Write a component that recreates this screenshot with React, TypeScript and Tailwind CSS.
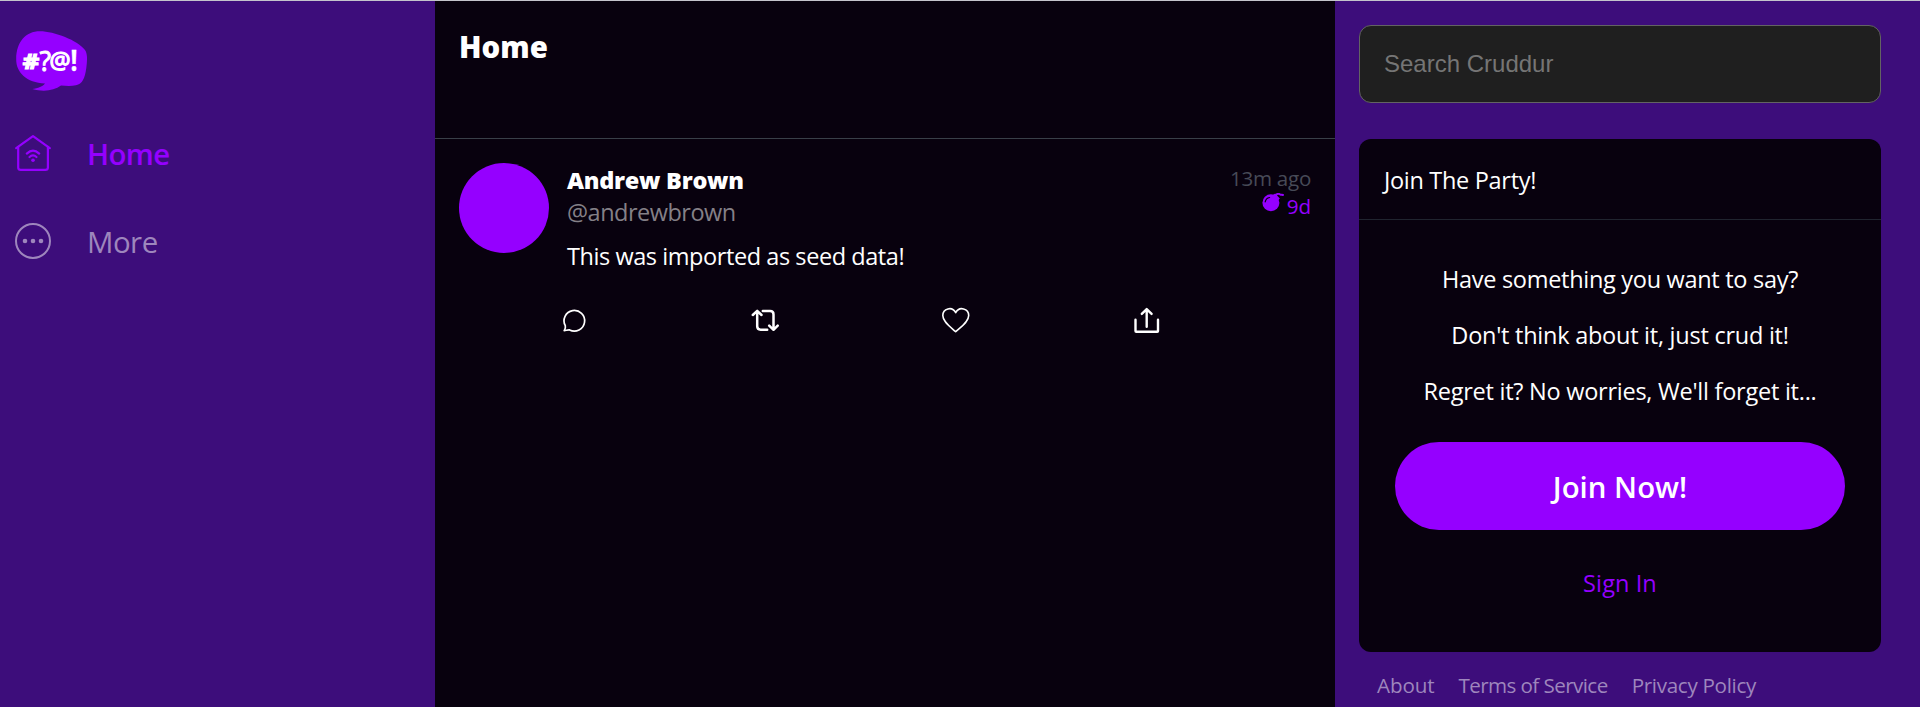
import type { ReactNode } from 'react';

function Logo() {
  return (
    <svg className="block h-[60px] w-[72px]" viewBox="16 31 72 60" role="img" aria-label="Cruddur">
      <path
        fill="#9500ff"
        d="M16.2 59C16.4 42 25.500 31.300 40 31.300C54 31.300 78 40.500 85 50C87.800 54 87.200 61 86.300 68C84.800 79 82.500 83.500 76 85.300C71 86.500 66 86 61 85.600C54 90.600 44 92.200 32.200 89.100C38 88.200 43 86.300 45 83.400C26 83 15.900 72 16.200 59Z"
      />
      <g fill="#fff" stroke="#fff" className="font-['Open_Sans',sans-serif]">
        <text x="22.800" y="68.700" fontSize="21.500" strokeWidth="1.200" fontWeight="700" textLength="16.500" lengthAdjust="spacingAndGlyphs">#</text>
        <text x="39.600" y="71.300" fontSize="28" strokeWidth="1" fontWeight="500" textLength="11.500" lengthAdjust="spacingAndGlyphs">?</text>
        <text x="49.400" y="68.800" fontSize="23.500" strokeWidth="1.200" fontWeight="400" textLength="21" lengthAdjust="spacingAndGlyphs">@</text>
        <text x="70.400" y="71.300" fontSize="28" strokeWidth="0.400" fontWeight="700" textLength="7" lengthAdjust="spacingAndGlyphs">!</text>
      </g>
    </svg>
  );
}

function HouseIcon() {
  return (
    <svg className="block size-9 shrink-0" viewBox="0 0 36 36" fill="none" stroke="currentColor" strokeWidth="2.200" strokeLinecap="round" strokeLinejoin="round">
      <path d="M1.200 13.200L18 1.200L34.800 13.200" />
      <path d="M3.200 11.800V32.400Q3.200 34.800 5.800 34.800H30.300Q32.900 34.800 32.900 32.400V11.800" />
      <path d="M11.800 18.600Q18 12.800 24.200 18.600M14.500 22Q18 18.900 21.500 22" />
      <circle cx="18" cy="25.300" r="1.800" fill="currentColor" stroke="none" />
    </svg>
  );
}

function MoreIcon() {
  return (
    <svg className="block size-9 shrink-0" viewBox="0 0 36 36" fill="currentColor">
      <circle cx="18" cy="18" r="17" fill="none" stroke="currentColor" strokeWidth="2" />
      <circle cx="10" cy="18" r="2.300" />
      <circle cx="18" cy="18" r="2.300" />
      <circle cx="26" cy="18" r="2.300" />
    </svg>
  );
}

function BombIcon() {
  return (
    <svg className="block h-[19px] w-[22px] shrink-0" viewBox="0 0 22 19">
      <circle cx="8.900" cy="9.800" r="8.500" fill="#9500ff" />
      <path d="M10.500 2.200L13.200 0.400L17.800 5.400L15.500 8Z" fill="#9500ff" />
      <path d="M14 2.200C15 0.600 16.500 0.500 18 1.300C19.200 1.900 20 1.700 21 2" stroke="#9500ff" strokeWidth="2" fill="none" strokeLinecap="round" />
      <path d="M3.200 8.800C3.700 6.400 5.200 5 7.600 4.500" stroke="#08010e" strokeWidth="1.200" fill="none" strokeLinecap="round" />
    </svg>
  );
}

function ActionIcon({ children, label }: { children: ReactNode; label: string }) {
  return (
    <button aria-label={label} className="block">
      <svg className="block size-[30px]" viewBox="0 0 30 30" fill="none" stroke="#fff" strokeLinecap="round" strokeLinejoin="round">
        {children}
      </svg>
    </button>
  );
}

function Activity() {
  return (
    <article className="flex items-start px-6 pt-6">
      <div className="size-[90px] shrink-0 rounded-full bg-[#9500ff]" />
      <div className="ml-[18px] min-w-0 flex-1">
        <div className="flex justify-between">
          <div className="pt-px text-[23.5px] leading-8">
            <div className="font-extrabold tracking-[-0.27px] text-white">Andrew Brown</div>
            <div className="tracking-[-0.5px] text-[#848087]">@andrewbrown</div>
          </div>
          <div className="pt-px text-right text-[20.6px] leading-7">
            <div className="tracking-[-0.3px] text-[#474a57]">13m ago</div>
            <div className="flex items-start justify-end gap-[3px] text-[#9500ff]">
              <span className="pt-px"><BombIcon /></span>
              <span>9d</span>
            </div>
          </div>
        </div>
        <p className="mt-3 text-[23.5px] leading-8 tracking-[-0.43px] text-white">This was imported as seed data!</p>
        <div className="mt-[33px] -ml-2 flex gap-[161px]">
          <ActionIcon label="Reply">
            <path strokeWidth="1.700" d="M5.200 25.700C6.300 24.100 6.700 22.500 6.300 20.700A10.300 10.300 0 1 1 10.600 24.900C8.900 24.600 7 25.600 5.200 25.700Z" />
          </ActionIcon>
          <ActionIcon label="Repost">
            <path strokeWidth="2.500" d="M2.800 10L7.200 5.800L11.500 10M7.200 6.500V21.300Q7.200 24.700 10.600 24.700H17.200M12.800 6H20.100Q23.500 6 23.500 9.400V24M19.200 20.700L23.500 24.800L27.700 20.700" />
          </ActionIcon>
          <ActionIcon label="Like">
            <path strokeWidth="1.600" d="M14.700 26.700C9.100 21.700 1.800 16.700 1.800 10.400C1.800 3.700 11.100 0.700 14.700 7.700C18.300 0.700 27.700 3.700 27.700 10.400C27.700 16.700 20.300 21.700 14.700 26.700Z" />
          </ActionIcon>
          <ActionIcon label="Share">
            <path strokeWidth="2.400" d="M3.500 14.700V26Q3.500 26.700 4.200 26.700H25.300Q26 26.700 26 26V14.700M14.700 21.700V4.500M9.800 8.900L14.700 4.100L19.600 8.900" />
          </ActionIcon>
        </div>
      </div>
    </article>
  );
}

export default function App() {
  return (
    <div className="flex h-[707px] w-full overflow-hidden border-t border-[#c4c4cc] bg-[#3d0d7b] font-['Open_Sans','Noto_Sans',sans-serif]">
      <nav className="w-[435px] shrink-0 pt-[30px]">
        <div className="ml-4">
          <Logo />
        </div>
        <a className="mt-11 ml-[15px] flex h-9 items-center gap-9 text-[#9500ff]">
          <HouseIcon />
          <span className="pt-px text-[29.4px] leading-9 font-semibold tracking-[-0.6px]">Home</span>
        </a>
        <a className="mt-[52px] ml-[15px] flex h-9 items-center gap-9 text-[#9e86bd]">
          <MoreIcon />
          <span className="pt-px text-[29.4px] leading-9 tracking-[-0.5px]">More</span>
        </a>
      </nav>

      <main className="w-[900px] shrink-0 bg-[#08010e]">
        <header className="h-[138px] border-b border-[#393f48] px-6 pt-7">
          <h1 className="text-[29.4px] leading-9 font-extrabold text-white">Home</h1>
        </header>
        <Activity />
      </main>

      <aside className="flex-1 pt-6 pl-6">
        <input
          className="block h-[78px] w-[522px] rounded-xl border border-[#636363] bg-[#1f1f1f] px-6 font-['Liberation_Sans',Arial,sans-serif] text-2xl text-white outline-none placeholder:text-[#757575]"
          placeholder="Search Cruddur"
        />
        <section className="mt-9 h-[513px] w-[522px] rounded-xl bg-[#08010e] text-white">
          <h2 className="h-[81px] border-b border-[#20242f] pt-[25px] pl-[25px] text-[23.5px] leading-8 tracking-[-0.31px]">Join The Party!</h2>
          <div className="flex flex-col px-9 pt-[43px] text-center text-[23.5px] leading-8">
            <div className="flex flex-col gap-6">
              <p className="tracking-[-0.29px]">Have something you want to say?</p>
              <p className="tracking-[-0.25px]">Don't think about it, just crud it!</p>
              <p className="tracking-[-0.25px]">Regret it? No worries, We'll forget it...</p>
            </div>
            <a className="mt-[35px] flex h-[88px] items-center justify-center rounded-full bg-[#9500ff] pt-px text-[29.4px] leading-9 font-semibold">Join Now!</a>
            <a className="mt-[37px] tracking-[0.1px] text-[#9500ff]">Sign In</a>
          </div>
        </section>
        <footer className="mt-[19px] flex gap-6 pl-[18px] text-[20.6px] leading-7 text-[#9e86bd]">
          <a className="tracking-[-0.1px]">About</a>
          <a className="tracking-[-0.58px]">Terms of Service</a>
          <a className="tracking-[-0.3px]">Privacy Policy</a>
        </footer>
      </aside>
    </div>
  );
}
